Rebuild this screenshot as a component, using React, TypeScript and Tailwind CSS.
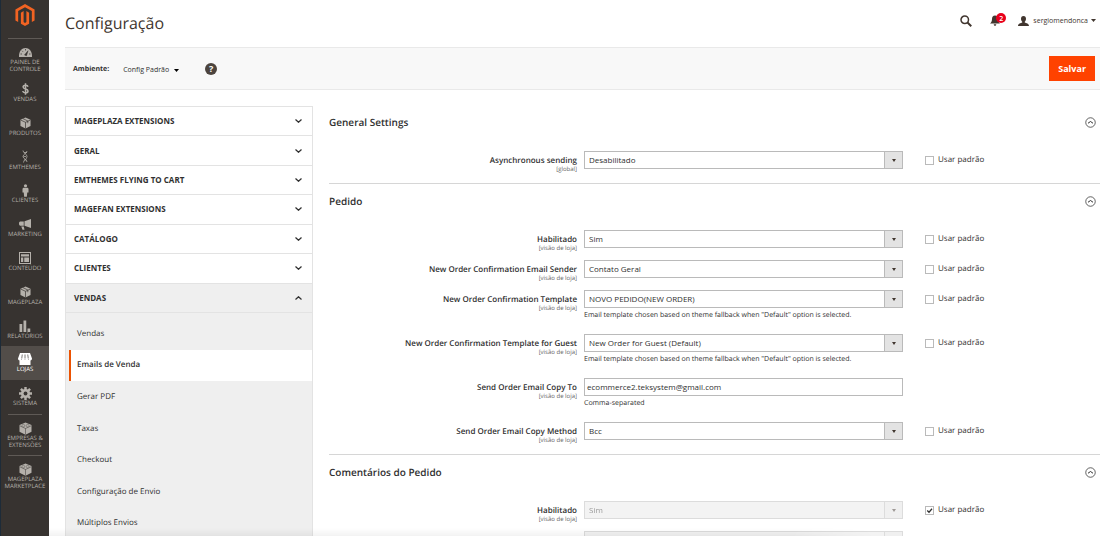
import { useId, useState, type ReactNode } from "react";

type MenuEntry = { lines: string[]; icon: ReactNode; active?: boolean };

const cube = (
  <svg viewBox="0 0 24 26" className="h-3 w-[11px]">
    <path d="M12 1 1 6v13.500L12 25l11-5.500V6z" fill="currentColor" />
    <path d="M1.500 6.500 12 11.500l10.500-5M12 11.500V25M6.500 3.500 17 8.500v5" stroke="#373330" strokeWidth="1.500" fill="none" />
  </svg>
);

const brick = (
  <svg viewBox="0 0 26 26" className="h-[13px] w-[13px]" fill="currentColor">
    <path d="M13 1 1 6v13.500L13 25.500l12-6V6z" />
    <path d="M1.500 7.500 13 13v12M24.500 7.500 13 13" stroke="#373330" strokeWidth="1" fill="none" />
    <path
      d="M6 6c0-1.500 5.500-1.500 5.500 0v2.500c0 1.500-5.500 1.500-5.500 0zM14.500 6c0-1.500 5.500-1.500 5.500 0v2.500c0 1.500-5.500 1.500-5.500 0z"
      stroke="#373330"
      strokeWidth=".7"
    />
  </svg>
);

const mainMenu: MenuEntry[] = [
  {
    lines: ["VENDAS"],
    icon: (
      <svg viewBox="0 0 14 24" className="h-3 w-[7px]" fill="none" stroke="currentColor" strokeWidth="3">
        <path d="M12 7.500C11.500 5 9.500 4.300 7 4.300S2.200 5.500 2.200 8s2 3.200 4.800 4 5 1.500 5 4-2 3.700-5 3.700-5-1-5.400-3.700M7 0.500v23" />
      </svg>
    ),
  },
  { lines: ["PRODUTOS"], icon: cube },
  {
    lines: ["EMTHEMES"],
    icon: (
      <svg viewBox="0 0 12 26" className="h-[13px] w-1.5" fill="none" stroke="currentColor" strokeWidth="1.500">
        <path d="M2 1c0 6 8 6 8 12s-7 6-7 12M10 2c0 5-8 6-8 11s8 5 8 11M4 5h6M3 13h5M4 20h5" />
      </svg>
    ),
  },
  {
    lines: ["CLIENTES"],
    icon: (
      <svg viewBox="0 0 14 26" className="h-[13px] w-[7px]" fill="currentColor">
        <circle cx="7" cy="3.500" r="3.200" />
        <path d="M4 7.500h6c2 0 3 1 3 3V17h-2.500l-.8 8.500H4.300L3.500 17H1v-6.500c0-2 1-3 3-3z" />
      </svg>
    ),
  },
  {
    lines: ["MARKETING"],
    icon: (
      <svg viewBox="0 0 24 22" className="h-[11px] w-3" fill="currentColor">
        <path d="M24 0v18L11 13.500V4.500zM9.500 5v8.500H2.500C1 13.500 0 12 0 9.200S1 5 2.500 5zM4.500 15h5l1.500 6.500H7z" />
      </svg>
    ),
  },
  {
    lines: ["CONTEÚDO"],
    icon: (
      <svg viewBox="0 0 24 24" className="h-3 w-3" fill="currentColor">
        <path fillRule="evenodd" d="M0 0h24v24H0zM2 2v20h20V2z" />
        <path d="M4 4.500h16V9H4zM4 11h4.500v9H4zM10.500 11H20v9h-9.500z" />
      </svg>
    ),
  },
  { lines: ["MAGEPLAZA"], icon: cube },
  {
    lines: ["RELATÓRIOS"],
    icon: (
      <svg viewBox="0 0 24 24" className="h-3 w-3" fill="currentColor">
        <path d="M1 8h5.500v16H1zM9 1h5.500v23H9zM17 17h5.500v7H17z" />
      </svg>
    ),
  },
  {
    lines: ["LOJAS"],
    active: true,
    icon: (
      <svg viewBox="0 0 28 24" className="h-3 w-3.5" fill="currentColor">
        <path d="M4 0h20l4 11c0 2.500-1.500 4-3.500 4S21 13.500 21 12c0 1.500-1.500 3-3.500 3S14 13.500 14 12c0 1.500-1.500 3-3.500 3S7 13.500 7 12c0 1.500-1.500 3-3.500 3S0 13.500 0 11z" />
        <path d="M3 14h22v10H3z" />
        <path d="M8.500 3 7.500 11M14 3v8M19.500 3l1 8" stroke="#524d49" strokeWidth="1.500" />
      </svg>
    ),
  },
  {
    lines: ["SISTEMA"],
    icon: (
      <svg viewBox="0 0 24 24" className="h-[13px] w-[13px]">
        <path d="M12 0v24M0 12h24M3.500 3.500l17 17M20.500 3.500l-17 17" stroke="currentColor" strokeWidth="4.500" />
        <circle cx="12" cy="12" r="8.500" fill="currentColor" />
        <circle cx="12" cy="12" r="3.500" fill="#373330" />
      </svg>
    ),
  },
];

function MenuItem({ lines, icon, active }: MenuEntry) {
  return (
    <a
      href="#"
      className={
        "flex flex-1 flex-col items-center pt-[7px] text-[6px] leading-[7px] " +
        (active ? "bg-[#524d49] text-white" : "text-[#b5b1ab]")
      }
    >
      <span className="flex h-3 items-center justify-center">{icon}</span>
      <span className="mt-px text-center">
        {lines.map((l) => (
          <span key={l} className="block whitespace-nowrap">
            {l}
          </span>
        ))}
      </span>
    </a>
  );
}

function Divider() {
  return <div className="mx-[7px] h-px shrink-0 bg-[#5f5a56]" />;
}

function Sidebar() {
  return (
    <nav className="w-[49px] shrink-0 border-l border-[#1d2b38] bg-[#373330]">
      <a href="#" aria-label="Magento" className="flex h-[38px] justify-center pt-1">
        <svg viewBox="0 0 40 46" className="h-[22px] w-5" fill="#f26322">
          <path d="M20 0 0 11.500v23l5.700 3.300V14.800L20 6.600l14.300 8.200v23l5.700-3.300v-23z" />
          <path d="M22.900 37.800 20 39.500l-2.900-1.700V14.800l-5.700 3.300v23L20 46l8.600-4.900v-23l-5.700-3.300z" />
        </svg>
      </a>
      <Divider />
      <div className="flex min-h-[37px] flex-col">
        <MenuItem
          lines={["PAINEL DE", "CONTROLE"]}
          icon={
            <svg viewBox="0 0 26 18" className="h-[9px] w-[13px]">
              <path d="M0 18C-.5 7 5 0 13 0s13.500 7 13 18z" fill="currentColor" />
              <path d="M11 14 18 5.500 15 15.500z" stroke="#373330" fill="#373330" />
              <path d="M3 12h3M20 12h3M6 5.500l2 2M13 2v3" stroke="#373330" strokeWidth="1.500" />
            </svg>
          }
        />
      </div>
      <div className="flex min-h-[338px] flex-col">
        {mainMenu.map((m) => (
          <MenuItem key={m.lines[0]} {...m} />
        ))}
      </div>
      <Divider />
      <div className="flex min-h-10 flex-col">
        <MenuItem lines={["EMPRESAS &", "EXTENSÕES"]} icon={brick} />
      </div>
      <Divider />
      <div className="flex min-h-10 flex-col">
        <MenuItem lines={["MAGEPLAZA", "MARKETPLACE"]} icon={brick} />
      </div>
    </nav>
  );
}

function Header() {
  return (
    <header className="flex h-[47px] items-center justify-between pr-1">
      <h1 className="pb-0.5 text-[16px] leading-6 text-[#41362f]">Configuração</h1>
      <div className="flex items-center pb-1.5 text-[#41362f]">
        <button type="button" aria-label="Buscar">
          <svg viewBox="0 0 24 24" className="h-3 w-3" fill="none" stroke="currentColor">
            <circle cx="9.500" cy="9.500" r="7.500" strokeWidth="3" />
            <path d="m15 15 7.500 7.500" strokeWidth="4" />
          </svg>
        </button>
        <button type="button" aria-label="Notificações" className="relative ml-[18px]">
          <svg viewBox="0 0 20 22" className="h-[11px] w-2.5" fill="currentColor">
            <path d="M10 1c4 0 6 3 6 7 0 5 1.500 7 4 9H0c2.500-2 4-4 4-9 0-4 2-7 6-7zM7.500 18.500h5c0 4-5 4-5 0z" />
          </svg>
          <span className="absolute -top-0.5 left-1.5 flex h-2.5 w-2.5 items-center justify-center rounded-full bg-[#e8001c] text-[7px] font-semibold leading-none text-white">
            2
          </span>
        </button>
        <button type="button" className="ml-[18px] flex items-center text-[7px] leading-3">
          <svg viewBox="0 0 22 20" className="mr-1 h-2.5 w-[11px]" fill="currentColor">
            <path d="M11 0c3.500 0 5 2.300 5 5.500 0 3-1.200 4.700-2.500 6v1.500c3 1.200 8.500 2 8.500 7H0c0-5 5.500-5.800 8.500-7v-1.500C7.200 10.200 6 8.500 6 5.500 6 2.300 7.500 0 11 0z" />
          </svg>
          sergiomendonca
          <svg viewBox="0 0 10 6" className="ml-[3px] h-[3px] w-[5px]" fill="currentColor">
            <path d="M0 0h10L5 6z" />
          </svg>
        </button>
      </div>
    </header>
  );
}

function Toolbar() {
  return (
    <div className="flex h-[43px] items-center border-y border-[#e9e9e9] bg-[#f8f8f8] pl-2 pr-[5px] text-[7px] text-[#303030]">
      <span className="pt-1 font-bold">Ambiente:</span>
      <button type="button" className="ml-3.5 flex items-center pt-1">
        Config Padrão
        <svg viewBox="0 0 10 6" className="ml-[5px] h-[3px] w-[5px]" fill="#000">
          <path d="M0 0h10L5 6z" />
        </svg>
      </button>
      <button
        type="button"
        aria-label="Ajuda"
        className="ml-[26px] flex h-3 w-3 items-center justify-center rounded-full bg-[#4c443e] text-[9px] font-bold leading-none text-white"
      >
        ?
      </button>
      <button type="button" className="ml-auto h-[25px] bg-[#ff4200] px-[9px] text-[9px] font-bold text-white">
        Salvar
      </button>
    </div>
  );
}

function Chevron({ up }: { up?: boolean }) {
  return (
    <svg viewBox="0 0 14 8" className="h-1 w-[7px]" fill="none" stroke="#303030" strokeWidth="2.500">
      <path d={up ? "M1 7l6-5.500L13 7" : "M1 1l6 5.500L13 1"} />
    </svg>
  );
}

const groups = [
  "MAGEPLAZA EXTENSIONS",
  "GERAL",
  "EMTHEMES FLYING TO CART",
  "MAGEFAN EXTENSIONS",
  "CATÁLOGO",
  "CLIENTES",
  "VENDAS",
];

const pages = [
  "Vendas",
  "Emails de Venda",
  "Gerar PDF",
  "Taxas",
  "Checkout",
  "Configuração de Envio",
  "Múltiplos Envios",
];

function ConfigNav() {
  return (
    <nav className="w-[248px] shrink-0 border-x border-t border-[#e3e3e3] bg-[#efefef] text-[8px] text-[#303030]">
      <div className="flex min-h-[206px] flex-col">
        {groups.map((g) => (
          <button
            key={g}
            type="button"
            className={
              "flex flex-1 items-center justify-between border-b border-[#e3e3e3] pl-2 pr-2.5 font-bold " +
              (g === "VENDAS" ? "bg-[#efefef]" : "bg-white")
            }
          >
            {g}
            <Chevron up={g === "VENDAS"} />
          </button>
        ))}
      </div>
      <ul className="mt-[5px] flex min-h-[221px] flex-col pl-[3px]">
        {pages.map((p) => (
          <li key={p} className="flex flex-1">
            <a
              href="#"
              className={
                "flex flex-1 items-center border-l-2 pl-1.5 " +
                (p === "Emails de Venda" ? "border-[#eb5202] bg-white font-semibold" : "border-transparent")
              }
            >
              {p}
            </a>
          </li>
        ))}
      </ul>
    </nav>
  );
}

type FieldProps = {
  label: string;
  scope?: string;
  value: string;
  hint?: string;
  text?: boolean;
  inherited?: boolean;
  toggle?: boolean;
};

function Field({
  label,
  scope = "[visão de loja]",
  value,
  hint,
  text,
  inherited = false,
  toggle = true,
}: FieldProps) {
  const id = useId();
  const [useDefault, setUseDefault] = useState(inherited);
  const [content, setContent] = useState(value);
  return (
    <div className={"grid grid-cols-[248px_326px_1fr] items-start " + (hint ? "min-h-11" : "min-h-[30px]")}>
      <label htmlFor={id} className="pt-1 text-right">
        <span className="block text-[8px] font-semibold leading-[11px]">{label}</span>
        <span className="block text-[6px] leading-[7px] text-[#666]">{scope}</span>
      </label>
      <div className="ml-[7px]">
        {text ? (
          <input
            id={id}
            type="text"
            value={content}
            onChange={(e) => setContent(e.target.value)}
            className="block h-[18px] w-full border border-[#bababa] bg-white px-0.5 pb-0.5 text-[8px]"
          />
        ) : (
          <div className={"flex h-[18px] " + (useDefault ? "opacity-50" : "")}>
            <select
              id={id}
              disabled={useDefault}
              className="min-w-0 flex-1 appearance-none border border-[#bababa] bg-white pl-1 text-[8px] disabled:bg-[#e9e9e9]"
            >
              <option>{value}</option>
            </select>
            <span className="flex w-[18px] items-center justify-center border border-l-0 border-[#bababa] bg-[#e3e3e3]">
              <svg viewBox="0 0 8 6" className="h-[3px] w-1" fill="#41362f">
                <path d="M0 0h8L4 6z" />
              </svg>
            </span>
          </div>
        )}
        {hint && <p className="mt-[3px] whitespace-nowrap text-[7px] leading-[10px]">{hint}</p>}
      </div>
      {!text && toggle && (
        <label className="ml-[22px] flex h-[18px] items-center gap-1 text-[8px]">
          <span className="relative flex">
            <input
              type="checkbox"
              checked={useDefault}
              onChange={(e) => setUseDefault(e.target.checked)}
              className="h-[9px] w-[9px] appearance-none border border-[#bababa] bg-white"
            />
            {useDefault && (
              <svg
                viewBox="0 0 18 18"
                className="pointer-events-none absolute inset-0 h-[9px] w-[9px]"
                fill="none"
                stroke="#303030"
                strokeWidth="2.500"
              >
                <path d="m4.500 9 3.500 3.500 6-7" />
              </svg>
            )}
          </span>
          Usar padrão
        </label>
      )}
    </div>
  );
}

function Section({ title, children }: { title: string; children: ReactNode }) {
  return (
    <section className="border-b border-[#d6d6d6] pb-0.5">
      <div className="flex h-[46px] items-start justify-between pr-1 pt-2.5">
        <h2 className="text-[10px] font-semibold leading-[14px]">{title}</h2>
        <button type="button" aria-label={title} className="pt-0.5">
          <svg viewBox="0 0 22 22" className="h-[11px] w-[11px]" fill="none" stroke="#303030">
            <circle cx="11" cy="11" r="9.500" strokeWidth="1.500" />
            <path d="m6 12.500 5-3.500 5 3.500" strokeWidth="2" />
          </svg>
        </button>
      </div>
      {children}
    </section>
  );
}

const fallbackHint = 'Email template chosen based on theme fallback when "Default" option is selected.';

export default function App() {
  return (
    <div className="relative flex h-screen overflow-hidden bg-white font-['Open_Sans',sans-serif] text-[#303030] [text-rendering:geometricPrecision]">
      <Sidebar />
      <div className="min-w-0 flex-1 pl-4">
        <Header />
        <Toolbar />
        <div className="flex items-start pt-4">
          <ConfigNav />
          <main className="-mt-px ml-4 min-w-0 flex-1">
            <Section title="General Settings">
              <Field label="Asynchronous sending" scope="[global]" value="Desabilitado" />
            </Section>
            <Section title="Pedido">
              <Field label="Habilitado" value="Sim" />
              <Field label="New Order Confirmation Email Sender" value="Contato Geral" />
              <Field label="New Order Confirmation Template" value="NOVO PEDIDO(NEW ORDER)" hint={fallbackHint} />
              <Field
                label="New Order Confirmation Template for Guest"
                value="New Order for Guest (Default)"
                hint={fallbackHint}
              />
              <Field label="Send Order Email Copy To" value="ecommerce2.teksystem@gmail.com" hint="Comma-separated" text />
              <Field label="Send Order Email Copy Method" value="Bcc" />
            </Section>
            <Section title="Comentários do Pedido">
              <Field label="Habilitado" value="Sim" inherited />
              <Field label="" scope="" value="" inherited toggle={false} />
            </Section>
          </main>
        </div>
      </div>
      <div className="pointer-events-none absolute bottom-0 left-[49px] h-2 w-3/4 bg-linear-to-t from-black/5 to-transparent mask-r-from-90%" />
    </div>
  );
}
